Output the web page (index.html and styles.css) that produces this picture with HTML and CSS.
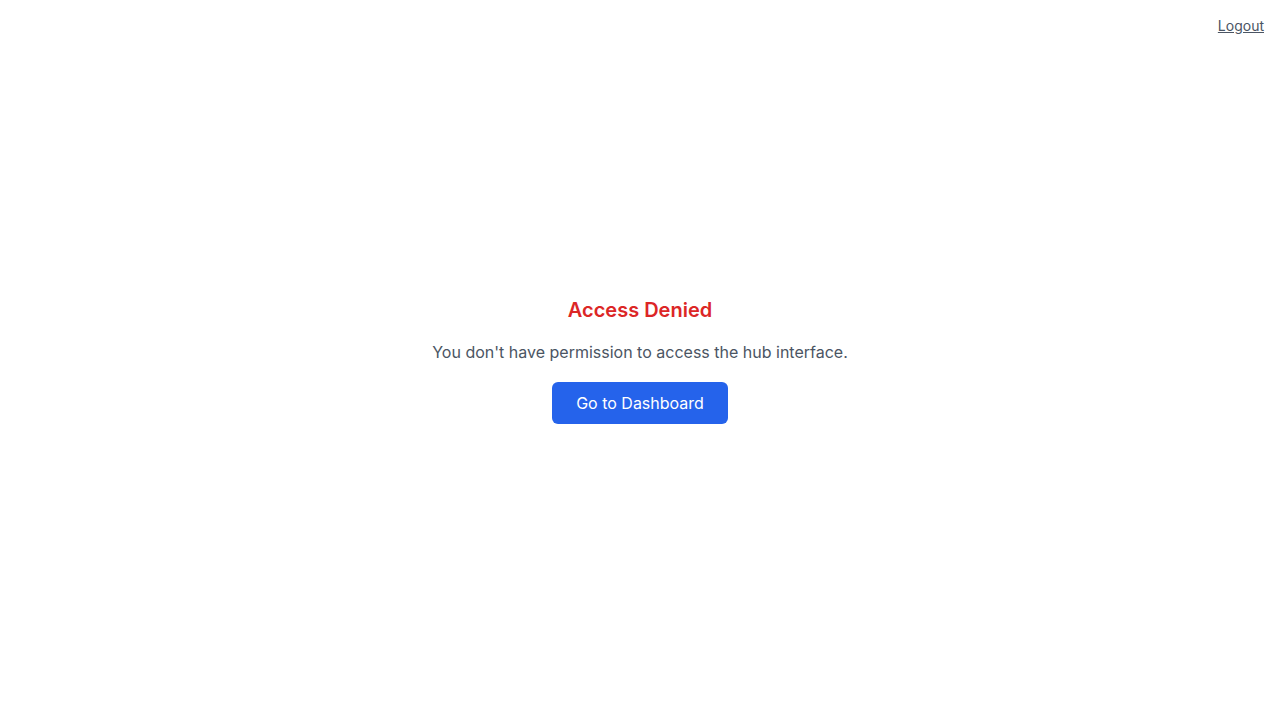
FILE: index.html
```html
<!DOCTYPE html>
<html lang="en">
<head>
<meta charset="utf-8">
<title>Access Denied</title>
<link rel="stylesheet" href="styles.css">
</head>
<body>
<div class="page">
  <a class="logout" href="#">Logout</a>
  <main class="denied">
    <h1 class="title">Access Denied</h1>
    <p class="message">You don't have permission to access the hub interface.</p>
    <button class="btn" type="button">Go to Dashboard</button>
  </main>
</div>
</body>
</html>
```
FILE: styles.css
```css
* { box-sizing: border-box; }
html, body { margin: 0; padding: 0; }
body {
  font-family: Inter, "Noto Sans", sans-serif;
  background: #ffffff;
  color: #111827;
}
.page {
  position: relative;
  height: 720px;
  display: flex;
  align-items: center;
  justify-content: center;
}
.logout {
  position: absolute;
  top: 16px;
  right: 16px;
  font-size: 14px;
  line-height: 20px;
  color: #4b5563;
  text-decoration: underline;
}
.denied {
  display: flex;
  flex-direction: column;
  align-items: center;
  text-align: center;
}
.title {
  margin: 0 0 16px;
  font-size: 20px;
  line-height: 28px;
  font-weight: 600;
  color: #dc2626;
}
.message {
  margin: 0 0 18px;
  font-size: 16px;
  line-height: 24px;
  color: #4b5563;
}
.btn {
  width: 176px;
  height: 42px;
  border: none;
  border-radius: 6px;
  background: #2563eb;
  color: #ffffff;
  font-family: inherit;
  font-size: 16px;
  line-height: 24px;
  cursor: pointer;
}
```
